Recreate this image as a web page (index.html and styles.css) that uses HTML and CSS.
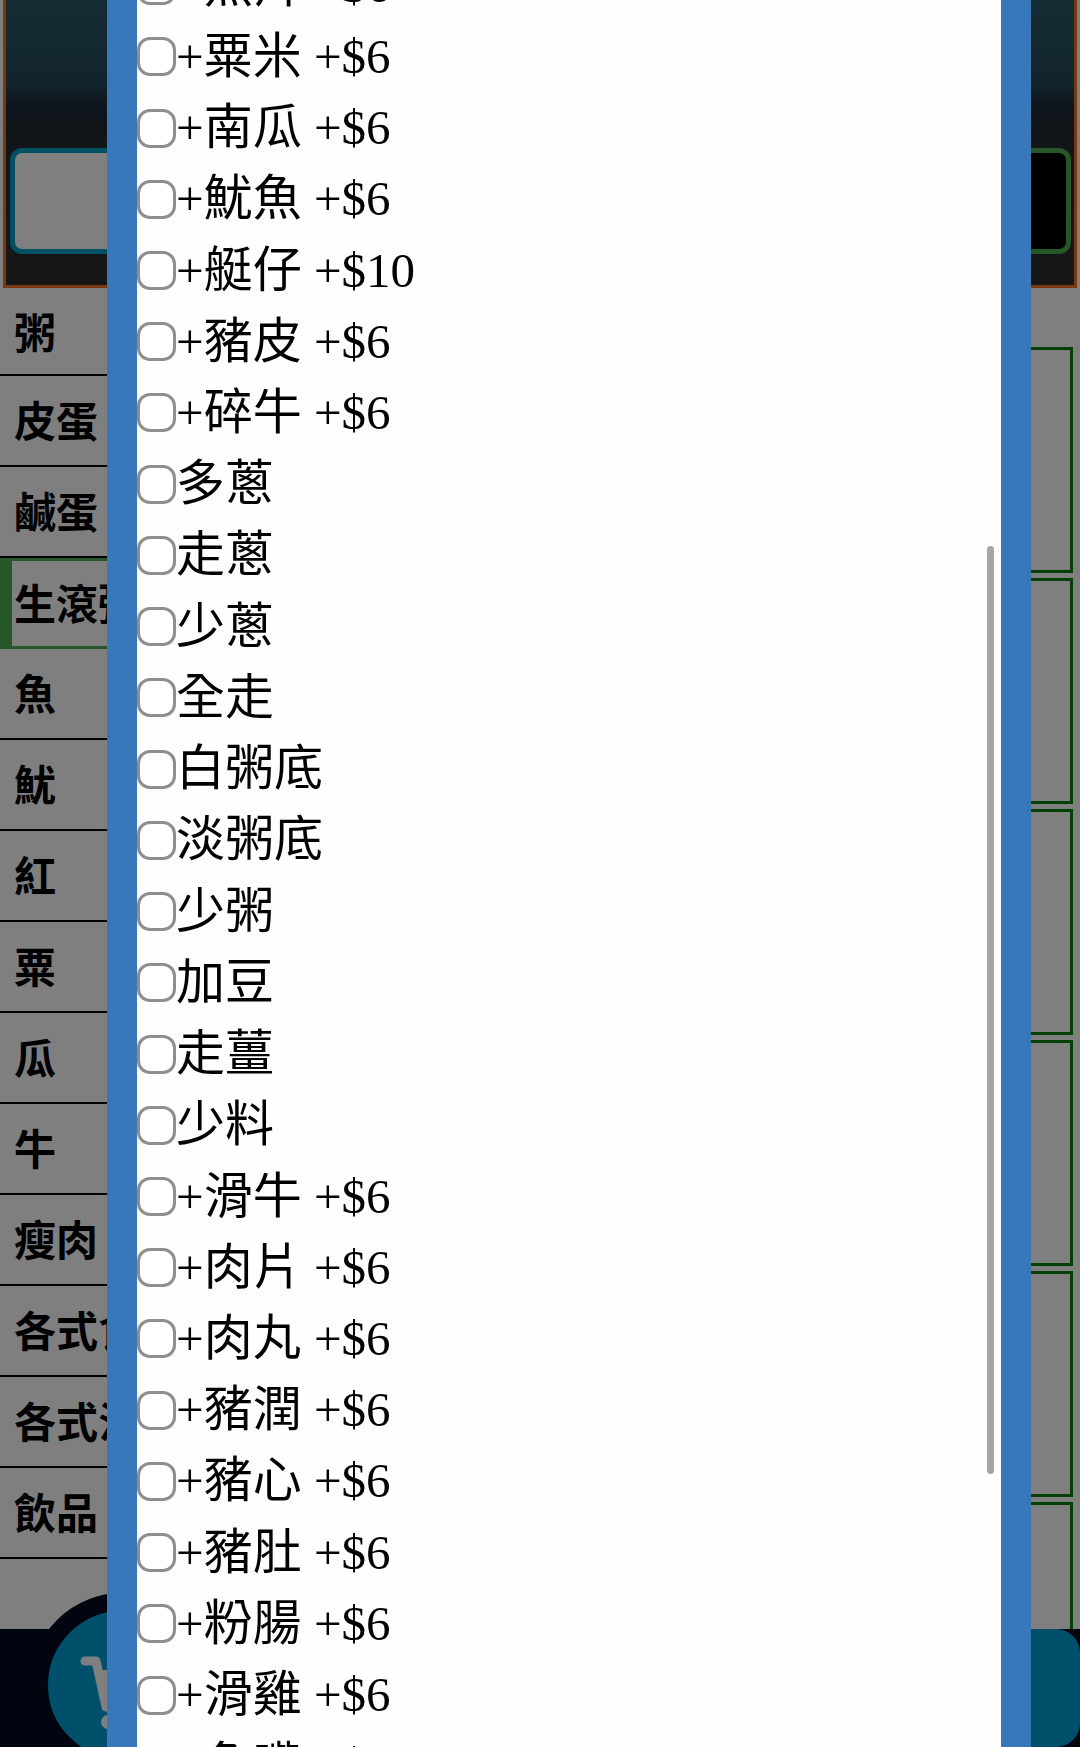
FILE: index.html
```
<!DOCTYPE html>
<html lang="zh-Hant">
  <head>
    <meta charset="UTF-8" />
    <meta name="viewport" content="width=device-width, initial-scale=1.0" />
    <title>點餐</title>
    <link rel="stylesheet" href="styles.css">
  </head>
  <body>
    <div class="page">
      <header class="banner">
        <button class="banner-btn" type="button" aria-label="搜尋"></button>
        <button class="banner-btn dark" type="button" aria-label="選單"></button>
      </header>
      <div class="main">
        <nav class="menu">
          <a href="#">粥</a>
          <a href="#">皮蛋</a>
          <a href="#">鹹蛋</a>
          <a href="#" class="on">生滾粥</a>
          <a href="#">魚</a>
          <a href="#">魷</a>
          <a href="#">紅</a>
          <a href="#">粟</a>
          <a href="#">瓜</a>
          <a href="#">牛</a>
          <a href="#">瘦肉</a>
          <a href="#">各式食品</a>
          <a href="#">各式油菜</a>
          <a href="#">飲品</a>
        </nav>
        <section class="cards">
          <article class="card"></article>
          <article class="card"></article>
          <article class="card"></article>
          <article class="card"></article>
          <article class="card"></article>
          <article class="card"></article>
        </section>
      </div>
      <footer class="bar">
        <button class="cart" type="button" aria-label="購物車">
          <svg viewBox="0 0 84 88" width="84" height="88">
            <path d="M5 20H16L26 66H72" fill="none" stroke="#fff" stroke-width="9" stroke-linecap="round" stroke-linejoin="round" />
            <path d="M20 29H79L71 55H26Z" fill="#fff" />
            <circle cx="28" cy="81" r="7" fill="#fff" />
            <circle cx="66" cy="81" r="7" fill="#fff" />
          </svg>
        </button>
        <button class="checkout" type="button" aria-label="結帳"></button>
      </footer>
    </div>

    <!-- 選項彈窗 -->
    <div class="mask">
      <div class="dialog" role="dialog" aria-label="選項">
        <form class="options">
          <label><input type="checkbox" />+魚片 +$6</label>
          <label><input type="checkbox" />+粟米 +$6</label>
          <label><input type="checkbox" />+南瓜 +$6</label>
          <label><input type="checkbox" />+魷魚 +$6</label>
          <label><input type="checkbox" />+艇仔 +$10</label>
          <label><input type="checkbox" />+豬皮 +$6</label>
          <label><input type="checkbox" />+碎牛 +$6</label>
          <label><input type="checkbox" />多蔥</label>
          <label><input type="checkbox" />走蔥</label>
          <label><input type="checkbox" />少蔥</label>
          <label><input type="checkbox" />全走</label>
          <label><input type="checkbox" />白粥底</label>
          <label><input type="checkbox" />淡粥底</label>
          <label><input type="checkbox" />少粥</label>
          <label><input type="checkbox" />加豆</label>
          <label><input type="checkbox" />走薑</label>
          <label><input type="checkbox" />少料</label>
          <label><input type="checkbox" />+滑牛 +$6</label>
          <label><input type="checkbox" />+肉片 +$6</label>
          <label><input type="checkbox" />+肉丸 +$6</label>
          <label><input type="checkbox" />+豬潤 +$6</label>
          <label><input type="checkbox" />+豬心 +$6</label>
          <label><input type="checkbox" />+豬肚 +$6</label>
          <label><input type="checkbox" />+粉腸 +$6</label>
          <label><input type="checkbox" />+滑雞 +$6</label>
          <label><input type="checkbox" />+魚嘴 +$6</label>
        </form>
        <span class="thumb"></span>
      </div>
    </div>
  </body>
</html>
```
FILE: styles.css
```
* {
  margin: 0;
  padding: 0;
  box-sizing: border-box;
}
body {
  height: 100vh;
  overflow: hidden;
  background: #fff;
  color: #000;
  font-family: "Liberation Serif", "Noto Sans CJK TC", serif;
}
button {
  border: none;
  cursor: pointer;
}
.page {
  height: 100vh;
  display: flex;
  flex-direction: column;
}

/* 頂部 */
.banner {
  flex: none;
  height: 288px;
  margin: 0 3px;
  padding: 0 3px 31px 4px;
  border: 3px solid #f07020;
  border-top: none;
  background: linear-gradient(#2a5a6c, #24485a 30%, #1c2c38 36%, #2a2a2e 60%, #2e2e30);
  display: flex;
  justify-content: space-between;
  align-items: flex-end;
}
.banner-btn {
  width: 45%;
  height: 106px;
  border: 5px solid #00a0c8;
  border-radius: 12px;
  background: #fff;
}
.banner-btn.dark {
  border-color: #4caf50;
  background: #000;
}

/* 分類和商品 */
.main {
  flex: 1;
  min-height: 0;
  display: flex;
  overflow: hidden;
}
.menu {
  flex: none;
  width: 30%;
}
.menu a {
  display: block;
  height: 91px;
  padding-left: 14px;
  border-bottom: 2px solid #000;
  color: #000;
  font: bold 42px/86px "Noto Sans CJK TC", sans-serif;
  text-decoration: none;
}
.menu a:first-child {
  height: 88px;
}
.menu a.on {
  padding-left: 2px;
  border: 3px solid #4caf50;
  border-left-width: 12px;
  line-height: 82px;
}
.cards {
  flex: 1;
  padding: 59px 7px 0 20px;
  display: flex;
  flex-direction: column;
  gap: 5px;
}
.card {
  flex: none;
  height: 226px;
  border: 3px solid green;
}

/* 底部 */
.bar {
  flex: none;
  height: 118px;
  background: #000a1e;
  display: flex;
  justify-content: flex-end;
  position: relative;
}
.cart {
  position: absolute;
  left: 30px;
  top: -36px;
  width: 184px;
  height: 184px;
  border: 18px solid #000a1e;
  border-radius: 50%;
  background: #00a0d8;
  display: flex;
  justify-content: center;
  align-items: center;
}
.checkout {
  width: 30%;
  border-radius: 0 24px 24px 0;
  background: #00a0d8;
}

/* 彈窗 */
.mask {
  position: fixed;
  inset: 0;
  padding: 0 49px 0 107px;
  background: rgba(0, 0, 0, 0.5);
}
.dialog {
  position: relative;
  height: 100%;
  border: solid #3977bb;
  border-width: 0 30px;
  background: #fefefe;
  overflow: hidden;
}
/* 已滾動的列表 */
.options {
  height: calc(100% + 105px);
  margin-top: -50px;
  display: grid;
  grid-auto-rows: 1fr;
}
.options label {
  display: flex;
  align-items: center;
  font-size: 49px;
  line-height: 70px;
  white-space: pre;
}
.options input {
  appearance: none;
  width: 39px;
  height: 39px;
  border: 3px solid #8e8e8e;
  border-radius: 13px;
  background: #fff;
}
.thumb {
  position: absolute;
  right: 7px;
  top: 546px;
  width: 7px;
  height: 928px;
  border-radius: 4px;
  background: #a5a5a5;
}
```
